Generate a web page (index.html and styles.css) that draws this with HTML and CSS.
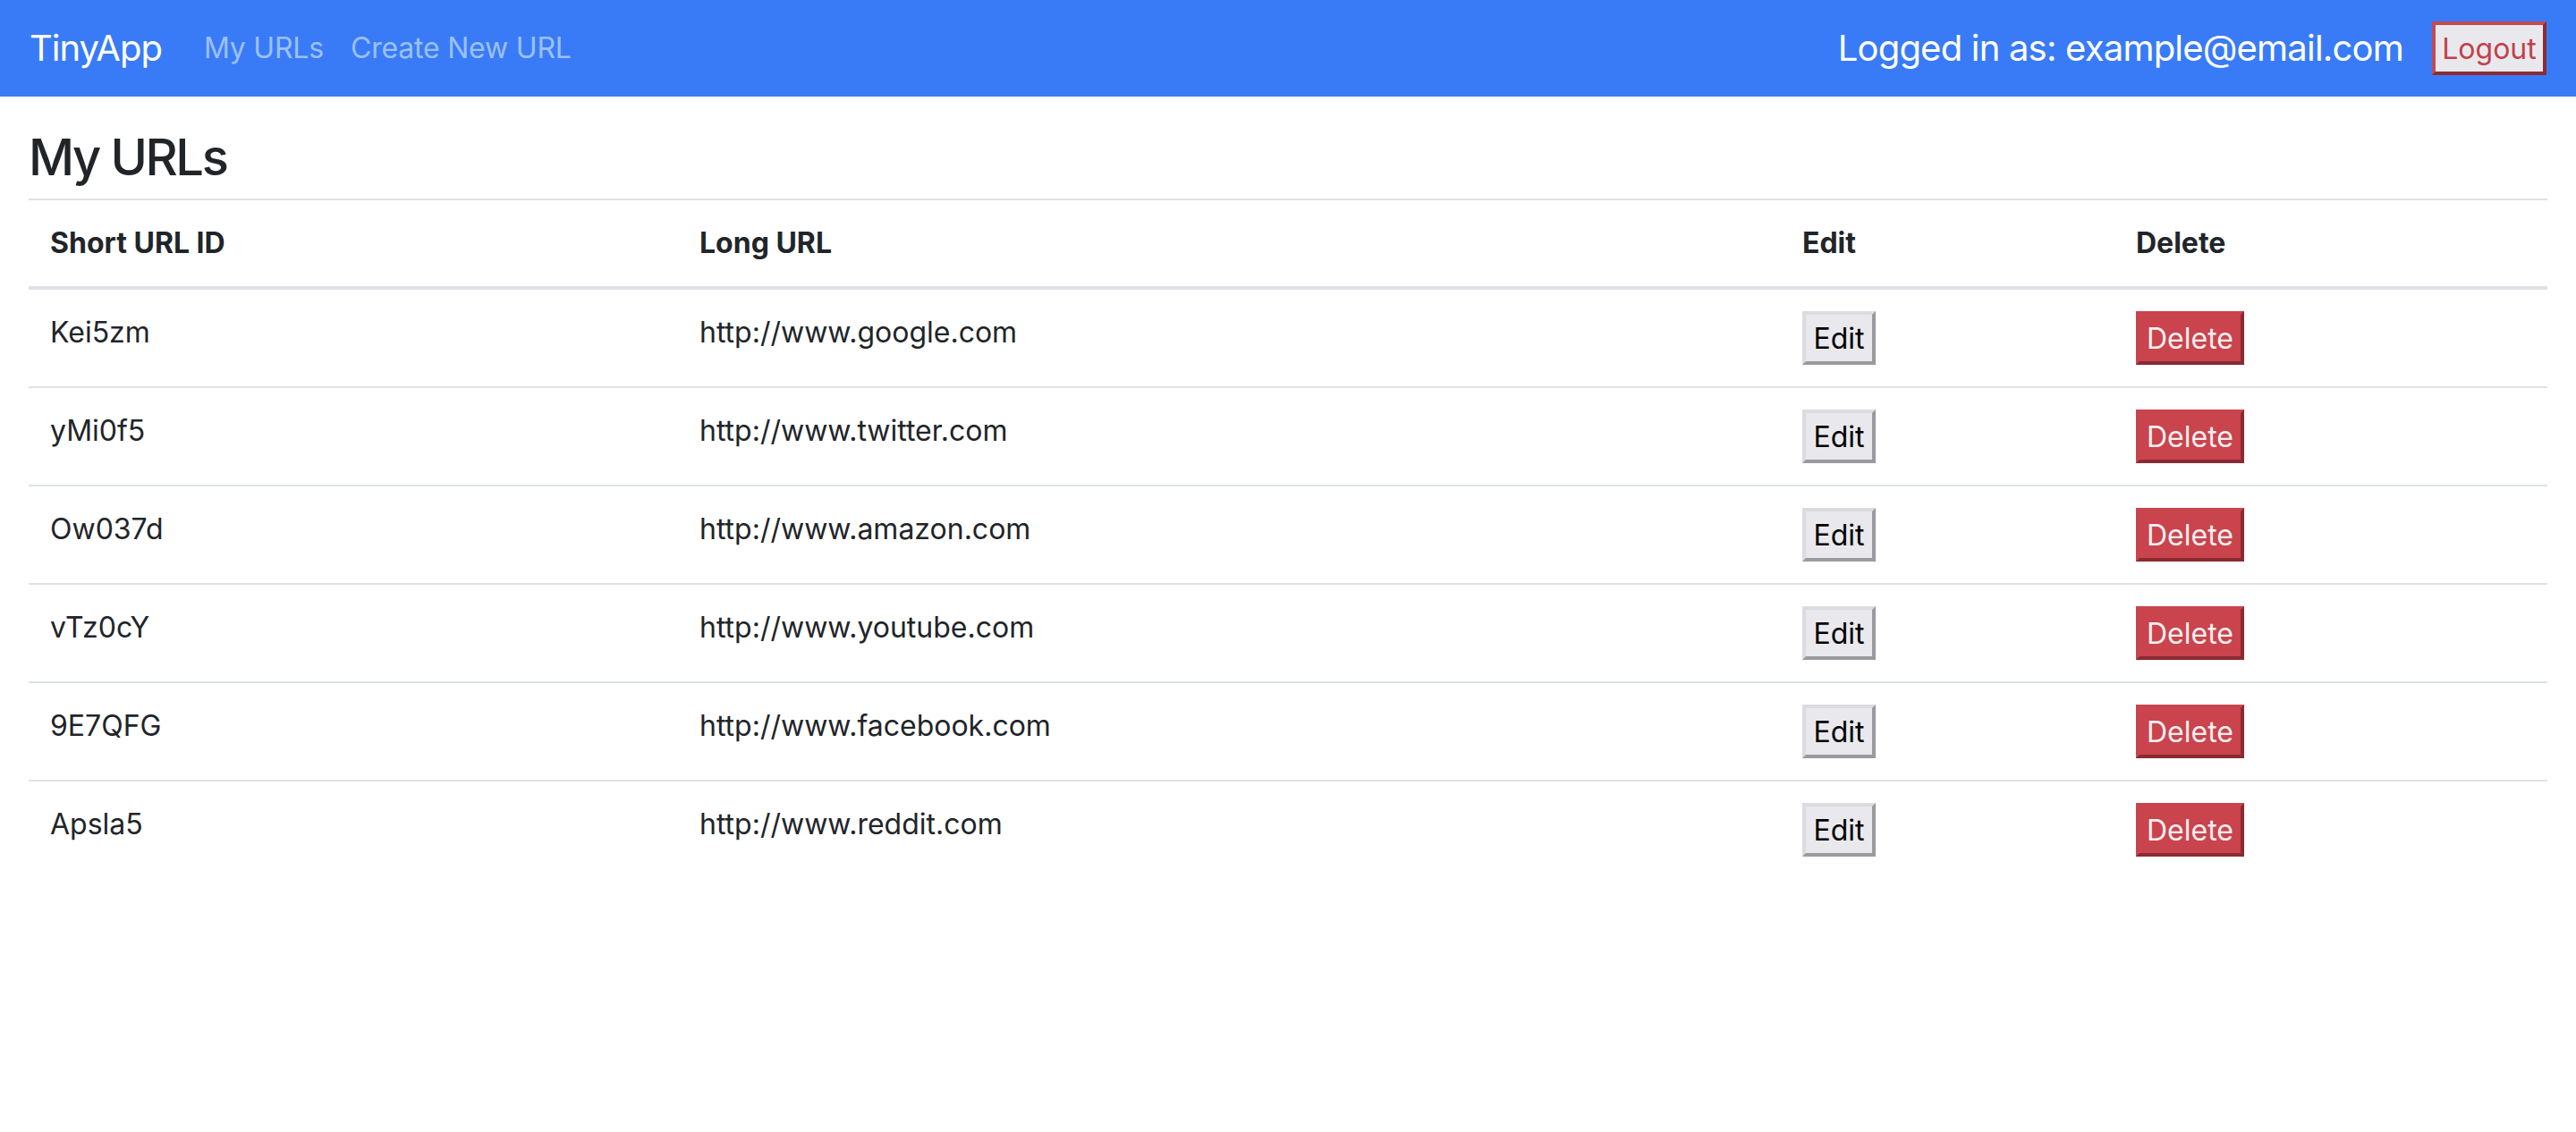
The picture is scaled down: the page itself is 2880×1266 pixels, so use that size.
FILE: index.html
```html
<!DOCTYPE html>
<html lang="en">
<head>
<meta charset="utf-8">
<title>TinyApp</title>
<link rel="stylesheet" href="styles.css">
</head>
<body>
<nav class="navbar">
  <a class="brand" href="#">TinyApp</a>
  <div class="nav-links">
    <a class="nav-link" href="#">My URLs</a>
    <a class="nav-link" href="#">Create New URL</a>
  </div>
  <div class="user">
    <span class="user-text">Logged in as: example@email.com</span>
    <button class="btn btn-logout">Logout</button>
  </div>
</nav>
<main class="container">
  <h3 class="title">My URLs</h3>
  <table class="table">
    <colgroup>
      <col class="c1"><col class="c2"><col class="c3"><col class="c4">
    </colgroup>
    <thead>
      <tr><th>Short URL ID</th><th>Long URL</th><th>Edit</th><th>Delete</th></tr>
    </thead>
    <tbody>
      <tr><td>Kei5zm</td><td>http://www.google.com</td><td><button class="btn btn-edit">Edit</button></td><td><button class="btn btn-delete">Delete</button></td></tr>
      <tr><td>yMi0f5</td><td>http://www.twitter.com</td><td><button class="btn btn-edit">Edit</button></td><td><button class="btn btn-delete">Delete</button></td></tr>
      <tr><td>Ow037d</td><td>http://www.amazon.com</td><td><button class="btn btn-edit">Edit</button></td><td><button class="btn btn-delete">Delete</button></td></tr>
      <tr><td>vTz0cY</td><td>http://www.youtube.com</td><td><button class="btn btn-edit">Edit</button></td><td><button class="btn btn-delete">Delete</button></td></tr>
      <tr><td>9E7QFG</td><td>http://www.facebook.com</td><td><button class="btn btn-edit">Edit</button></td><td><button class="btn btn-delete">Delete</button></td></tr>
      <tr><td>Apsla5</td><td>http://www.reddit.com</td><td><button class="btn btn-edit">Edit</button></td><td><button class="btn btn-delete">Delete</button></td></tr>
    </tbody>
  </table>
</main>
</body>
</html>
```
FILE: styles.css
```css
* { box-sizing: border-box; }
html, body {
  margin: 0;
  padding: 0;
  background: #ffffff;
  font-family: Inter, "Noto Sans", "Liberation Sans", sans-serif;
  color: #212529;
}
.navbar {
  display: flex;
  align-items: center;
  height: 108px;
  padding: 0 33px 0 33px;
  background: #397bf6;
}
.brand {
  font-size: 40px;
  line-height: 60px;
  letter-spacing: -1px;
  color: #ffffff;
  text-decoration: none;
  margin-right: 32px;
}
.nav-links {
  display: flex;
  flex: 1;
}
.nav-link {
  font-size: 32px;
  line-height: 48px;
  padding: 0 15px;
  letter-spacing: -0.2px;
  color: #9cc0fb;
  text-decoration: none;
}
.user {
  display: flex;
  align-items: center;
}
.user-text {
  font-size: 40px;
  line-height: 60px;
  letter-spacing: -0.8px;
  color: #ffffff;
  margin-right: 32px;
}
.btn {
  font-family: Inter, "Noto Sans", "Liberation Sans", sans-serif;
  font-size: 32px;
  height: 60px;
  padding: 0 10px;
  border-width: 4px;
  border-style: solid;
  border-radius: 0;
  cursor: pointer;
}
.btn-logout {
  width: 128px;
  padding: 0;
  background: #e9e9ed;
  color: #c2414b;
  border-color: #c24a52 #8d2b33 #8d2b33 #c24a52;
}
.btn-edit {
  display: block;
  width: 82px;
  padding: 0;
  background: #e9e9ed;
  color: #000000;
  border-color: #dcdce0 #9a9a9e #9a9a9e #dcdce0;
}
.btn-delete {
  display: block;
  width: 121px;
  padding: 0;
  background: #c9444d;
  color: #fbeff0;
  border-color: #c9444d #8a2a32 #8a2a32 #c9444d;
}
.container {
  padding: 35px 32px 0 32px;
}
.title {
  margin: 0 0 12px 0;
  font-size: 56px;
  font-weight: 500;
  line-height: 67px;
  letter-spacing: -2.4px;
  color: #212529;
}
.table {
  width: 100%;
  border-collapse: collapse;
  table-layout: fixed;
  border-top: 2px solid #dee2e6;
}
.c1 { width: 726px; }
.c2 { width: 1233px; }
.c3 { width: 373px; }
.c4 { width: 484px; }
.table th, .table td {
  padding: 24px;
  text-align: left;
  vertical-align: top;
  font-size: 32px;
  line-height: 48px;
}
.table th {
  font-weight: 700;
  border-bottom: 4px solid #dee2e6;
}
.table td {
  border-bottom: 2px solid #dee2e6;
  font-weight: 400;
}
.table tbody tr:last-child td {
  border-bottom: none;
}
```
